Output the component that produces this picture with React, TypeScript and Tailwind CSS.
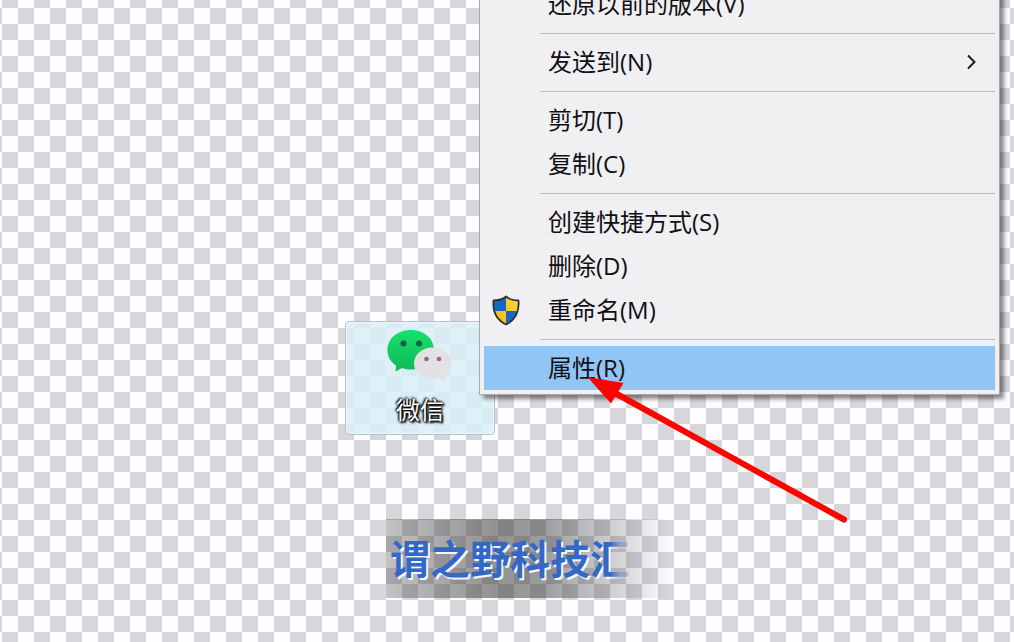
import React from "react";

type Entry = { label: string; shield?: boolean; submenu?: boolean; active?: boolean };

const groups: Entry[][] = [
  [{ label: "还原以前的版本(V)" }],
  [{ label: "发送到(N)", submenu: true }],
  [{ label: "剪切(T)" }, { label: "复制(C)" }],
  [{ label: "创建快捷方式(S)" }, { label: "删除(D)" }, { label: "重命名(M)", shield: true }],
  [{ label: "属性(R)", active: true }],
];

function Shield() {
  return (
    <svg className="h-8 w-8" viewBox="0 0 32 32" aria-hidden="true">
      <defs>
        <clipPath id="shield">
          <path d="M16 2.5C12.5 5.5 7.500 6.500 3.500 6.500C2.500 18 6 25.500 16 30.500C26 25.500 29.500 18 28.500 6.500C24.500 6.500 19.500 5.500 16 2.500Z" />
        </clipPath>
        <linearGradient id="gold" x1="0" x2="1" y1="1" y2="0">
          <stop offset="0" stopColor="#f2b90c" />
          <stop offset="1" stopColor="#fbd93c" />
        </linearGradient>
      </defs>
      <g clipPath="url(#shield)">
        <path fill="#1767c4" d="M0 0h16v17H0zM16 17h16v15H16z" />
        <path fill="url(#gold)" d="M16 0h16v17H16zM0 17h16v15H0z" />
      </g>
      <path
        d="M16 2.500C12.500 5.500 7.500 6.500 3.500 6.500C2.500 18 6 25.500 16 30.500C26 25.500 29.500 18 28.500 6.500C24.500 6.500 19.500 5.500 16 2.500Z"
        fill="none"
        stroke="#302e35"
        strokeWidth="1.8"
        strokeLinejoin="round"
      />
    </svg>
  );
}

function ContextMenu() {
  return (
    <div
      role="menu"
      className="absolute -top-[23px] left-[479px] w-[521px] border border-[#a9a9ab] bg-[#f0eff1] p-1 shadow-[4px_4px_4px_rgba(0,0,0,0.45)]"
    >
      {groups.map((group, i) => (
        <div key={i}>
          {i > 0 && (
            <div role="separator" className="flex h-[14px] items-center pl-14">
              <div className="h-px flex-1 bg-[#bdbcc1]" />
            </div>
          )}
          {group.map((entry) => (
            <button
              key={entry.label}
              type="button"
              role="menuitem"
              className={
                entry.active
                  ? "flex h-11 w-full items-center bg-[#90c5f5] text-left"
                  : "flex h-11 w-full items-center text-left hover:bg-white"
              }
            >
              <span className="flex w-16 shrink-0 items-center pl-[6px]">{entry.shield && <Shield />}</span>
              <span className="flex-1 whitespace-nowrap text-2xl text-[#101014]">{entry.label}</span>
              {entry.submenu && (
                <svg className="mr-4 h-4 w-4" viewBox="0 0 16 16" aria-hidden="true">
                  <path d="M5 1.500L11.500 8L5 14.500" fill="none" stroke="#1c1c1e" strokeWidth="2" />
                </svg>
              )}
            </button>
          ))}
        </div>
      ))}
    </div>
  );
}

function DesktopIcon() {
  return (
    <button
      type="button"
      className="absolute top-[321px] left-[345px] flex h-[114px] w-[150px] flex-col items-center rounded-sm border border-[#b9bfc6] bg-[#d9eef7]/85 pt-[6px] shadow-[inset_0_0_0_1px_#eaf6fb]"
    >
      <svg className="h-[54px] w-[68px]" viewBox="0 0 68 54" aria-hidden="true">
        <defs>
          <linearGradient id="green" x1="0" x2="0" y1="0" y2="1">
            <stop offset="0" stopColor="#16e06b" />
            <stop offset="1" stopColor="#0fba57" />
          </linearGradient>
        </defs>
        <path
          fill="url(#green)"
          d="M25 2C11.500 2 1.500 10.500 1.500 22C1.500 28.500 4.500 34 10 37.500L9.500 43.500L16 40C19 41 22 41.500 25 41.500C38 41.500 48 33 48 22C48 10.500 38 2 25 2Z"
        />
        <path
          fill="#e3e1e5"
          d="M46.500 19.500C36 19.500 28 26.500 28 35.500C28 44.500 36 51.500 46.500 51.500C49 51.500 51.500 51 53.500 50.500L60 53L59 48C63 45 65.500 40.500 65.500 35.500C65.500 26.500 57 19.500 46.500 19.500Z"
        />
        <circle cx="17.500" cy="15.500" r="3" fill="#14633c" />
        <circle cx="33" cy="15.500" r="3" fill="#14633c" />
        <circle cx="40.500" cy="31" r="2.300" fill="#77727b" />
        <circle cx="53" cy="31" r="2.300" fill="#a9646c" />
      </svg>
      <span className="mt-3 text-2xl text-white [text-shadow:0_0_2px_#000,1px_1px_2px_#000,-1px_-1px_2px_#222,0_0_3px_#000,2px_2px_2px_#333]">
        微信
      </span>
    </button>
  );
}

function Watermark() {
  return (
    <div className="absolute top-[519px] left-[386px] flex h-[79px] w-[286px] items-center bg-[linear-gradient(90deg,rgba(60,60,60,0.3),rgba(60,60,60,0.55)_38%,rgba(60,60,60,0.5)_55%,rgba(60,60,60,0.25)_78%,transparent)] pl-1 text-[40px] font-bold text-[#3568c4] [text-shadow:2px_2px_0_#f3f6ff]">
      <span className="leading-none">谓之野科技</span>
      <span className="leading-none [mask-image:linear-gradient(90deg,#000_50%,rgba(0,0,0,0.25)_75%)]">汇</span>
    </div>
  );
}

function Arrow() {
  return (
    <svg
      className="pointer-events-none absolute top-[370px] left-[580px] h-[160px] w-[275px]"
      viewBox="0 0 275 160"
      aria-hidden="true"
    >
      <path d="M35 23L264 149.500" stroke="#fb0500" strokeWidth="6" strokeLinecap="round" />
      <path d="M7.500 7L43.500 13L31 33.500Z" fill="#fb0500" />
    </svg>
  );
}

export default function App() {
  return (
    <main className="relative min-h-screen overflow-hidden bg-[repeating-conic-gradient(#d6d6db_0_25%,#fdfcfe_0_50%)] bg-[length:32px_32px] bg-[position:2px_8px] font-['Open_Sans','Noto_Sans_CJK_SC',sans-serif]">
      <DesktopIcon />
      <Watermark />
      <ContextMenu />
      <Arrow />
    </main>
  );
}
